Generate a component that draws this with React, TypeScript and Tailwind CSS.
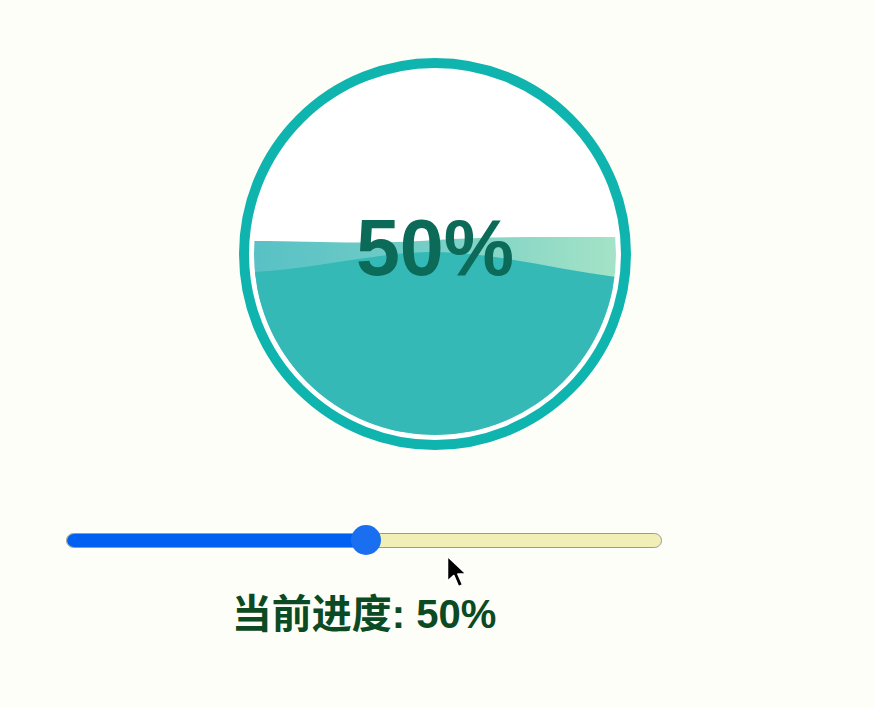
import React from "react";

const progress = 50;

function Wave() {
  // inner circle is 362px; coordinates are local to it
  return (
    <svg width="362" height="362" viewBox="0 0 362 362" className="block">
      <defs>
        <linearGradient id="backWave" x1="0" y1="0" x2="1" y2="0">
          <stop offset="0%" stopColor="#58c1c5" />
          <stop offset="40%" stopColor="#6fcbc6" />
          <stop offset="100%" stopColor="#a4e3c6" />
        </linearGradient>
      </defs>
      <path
        d="M0 168 C 60 168, 110 172, 181 167 C 240 163, 300 164, 362 164 L 362 362 L 0 362 Z"
        fill="url(#backWave)"
      />
      <path
        d="M0 199 C 60 196, 120 180, 175 179 C 240 179, 300 196, 362 204 L 362 362 L 0 362 Z"
        fill="#35b9b6"
      />
    </svg>
  );
}

function Cursor() {
  return (
    <svg
      width="26"
      height="36"
      viewBox="0 0 24 34"
      className="absolute left-[445px] top-[555px]"
    >
      <path
        d="M2 1 L2 25 L8 19.5 L12.5 30 L16.5 28.2 L12 18 L20 18 Z"
        fill="#000"
        stroke="#fff"
        strokeWidth="1.6"
        strokeLinejoin="round"
      />
    </svg>
  );
}

export default function App() {
  return (
    <div className="relative w-[874px] h-[708px] bg-[#fefef9] overflow-hidden font-['Liberation_Sans','Noto_Sans_CJK_SC',sans-serif]">
      <div className="pt-[58px] pl-[239px]">
        <div className="relative w-[392px] h-[392px] rounded-full border-[10px] border-[#0fb4ae] bg-white p-[5px]">
          <div className="w-[362px] h-[362px] rounded-full overflow-hidden">
            <Wave />
          </div>
          <div className="absolute inset-0 flex items-center justify-center pb-[14px]">
            <span className="text-[79px] leading-none font-bold text-[#0c6a58]">
              {progress}%
            </span>
          </div>
        </div>
      </div>

      <div className="ml-[66px] mt-[75px] w-[596px]">
        <div className="relative h-[30px] flex items-center">
          <div className="w-full h-[15px] rounded-full border border-[#9a9a9a] bg-[#f1efb6] overflow-hidden">
            <div className="h-full bg-[#0060f2]" style={{ width: `${progress}%` }} />
          </div>
          <div
            className="absolute top-0 w-[30px] h-[30px] -ml-[13px] rounded-full bg-[#1a6ff0]"
            style={{ left: `${progress}%` }}
          />
        </div>
        <div className="mt-[39px] text-center text-[40px] leading-none font-bold text-[#0b4a22]">
          当前进度: {progress}%
        </div>
      </div>

      <Cursor />
    </div>
  );
}
